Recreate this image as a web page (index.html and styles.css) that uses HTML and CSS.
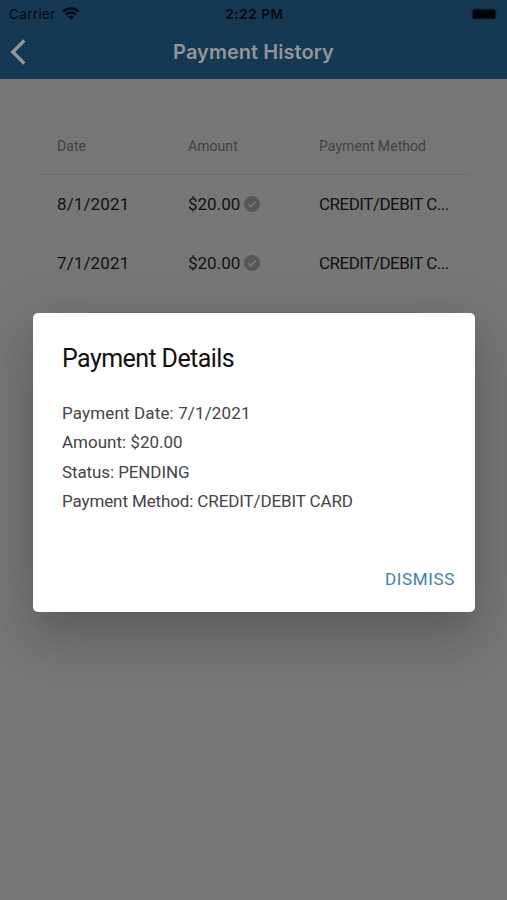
FILE: index.html
```html
<!DOCTYPE html>
<html lang="en">
<head>
<meta charset="utf-8">
<meta name="viewport" content="width=device-width">
<title>Payment History</title>
<link rel="stylesheet" href="styles.css">
</head>
<body>
<header class="header">
  <div class="status">
    <div class="carrier"><span class="carrier-name">Carrier</span>
      <svg class="wifi" viewBox="0 0 18 13"><path d="M1.2 4.7a11 11 0 0 1 15.6 0M4 7.6a7 7 0 0 1 10 0" fill="none" stroke="currentColor" stroke-width="2.3"/><path d="M6 9.7a4.2 4.2 0 0 1 6 0L9 12.8z" fill="currentColor"/></svg>
    </div>
    <span class="clock">2:22 PM</span>
    <svg class="battery" viewBox="0 0 29 12"><rect x=".5" y=".5" width="25" height="11" rx="3" fill="none" stroke="#122f47"/><rect x="1.500" y="1.500" width="23" height="9" rx="1.5" fill="#010306"/><path d="M27 4q1.500 2 0 4z" fill="#102c43"/></svg>
  </div>
  <div class="nav">
    <svg class="back" viewBox="0 0 17 26"><path d="M14.300 1.500 2.800 13 14.300 24.500" fill="none" stroke="currentColor" stroke-width="3.300"/></svg>
    <h1 class="title"><span>Payment History</span></h1>
  </div>
</header>
<main class="table">
  <div class="row head"><span>Date</span><span>Amount</span><span>Payment Method</span></div>
  <div class="row line"><span class="date">8/1/2021</span><span class="amount"><span class="money">$20.00</span><svg class="check" viewBox="0 0 16 16"><circle cx="8" cy="8" r="8" fill="#575757"/><path d="m4.300 8.300 2.500 2.500 5-5.200" fill="none" stroke="#7b7b7b" stroke-width="1.600"/></svg></span><span class="method">CREDIT/DEBIT C...</span></div>
  <div class="row"><span class="date">7/1/2021</span><span class="amount"><span class="money">$20.00</span><svg class="check" viewBox="0 0 16 16"><circle cx="8" cy="8" r="8" fill="#575757"/><path d="m4.300 8.300 2.500 2.500 5-5.200" fill="none" stroke="#7b7b7b" stroke-width="1.600"/></svg></span><span class="method">CREDIT/DEBIT C...</span></div>
</main>
<section class="dialog" role="dialog">
  <h2 class="dialog-title">Payment Details</h2>
  <div class="details">
    <p class="paid-on">Payment Date: 7/1/2021</p>
    <p>Amount: $20.00</p>
    <p class="state">Status: PENDING</p>
    <p class="paid-by">Payment Method: CREDIT/DEBIT CARD</p>
  </div>
  <div class="actions"><button class="dismiss">DISMISS</button></div>
</section>
</body>
</html>
```
FILE: styles.css
```css
* { box-sizing: border-box; }
body {
  margin: 0;
  height: 900px;
  overflow: hidden;
  position: relative;
  background: #777;
  font-family: Roboto, "Liberation Sans", sans-serif;
}
.header {
  height: 79px;
  background: #153853;
  font-family: Inter, "Liberation Sans", sans-serif;
}
.status {
  height: 27px;
  padding: 0 7px 0 9px;
  display: grid;
  grid-template-columns: 1fr auto 1fr;
  align-items: center;
  color: #02070b;
}
.carrier { display: flex; align-items: center; gap: 6px; font-size: 13.5px; letter-spacing: .35px; }
.wifi { width: 18px; height: 13px; }
.clock { font-size: 13.5px; font-weight: 600; letter-spacing: .6px; }
.battery { width: 29px; height: 12px; justify-self: end; }
.nav {
  height: 50px;
  display: grid;
  grid-template-columns: 40px 1fr 40px;
  align-items: center;
  color: #929599;
}
.back { width: 17px; height: 26px; margin-left: 10px; }
.title { margin: 0; text-align: center; font-size: 20px; line-height: 26px; font-weight: 600; letter-spacing: .05px; }
.table { padding: 39px 39px 0 40px; }
.row {
  height: 59px;
  padding: 0 0 2px 17px;
  display: grid;
  grid-template-columns: 131px 131px 1fr;
  align-items: center;
  white-space: nowrap;
  font-size: 17px;
  color: #111;
}
.row > span { justify-self: start; }
.row.head { height: 57px; padding-bottom: 0; border-bottom: 1px solid #6c6c6c; font-size: 14px; letter-spacing: .06px; color: #414141; }
.line { box-shadow: inset 0 -1px #747474; }
.date { letter-spacing: .12px; }
.method { letter-spacing: -.5px; }
.amount { display: flex; align-items: center; gap: 4px; }
.check { width: 16px; height: 16px; }
.dialog {
  position: absolute;
  left: 33px;
  top: 313px;
  width: 442px;
  height: 299px;
  padding: 30px 20px 20px 29px;
  border-radius: 5px;
  background: #fff;
  box-shadow: 0 14px 20px -9px rgba(0,0,0,.08), 0 30px 48px 4px rgba(0,0,0,.10), 0 11px 56px 10px rgba(0,0,0,.09);
}
.dialog-title { margin: 0 0 24px; font-size: 25px; line-height: 32px; font-weight: 400; letter-spacing: -.58px; color: #111; }
.details p { margin: 0; height: 29.33px; line-height: 29.33px; font-size: 17px; color: #444; white-space: nowrap; }
.details .paid-on { letter-spacing: .14px; }
.details .state { letter-spacing: -.1px; }
.details .paid-by { letter-spacing: -.12px; }
.actions { margin-top: 49px; display: flex; justify-content: flex-end; }
.dismiss { padding: 0; border: 0; background: none; font: 400 17px/28px Roboto, sans-serif; letter-spacing: .65px; color: #3d7fb3; }
```
